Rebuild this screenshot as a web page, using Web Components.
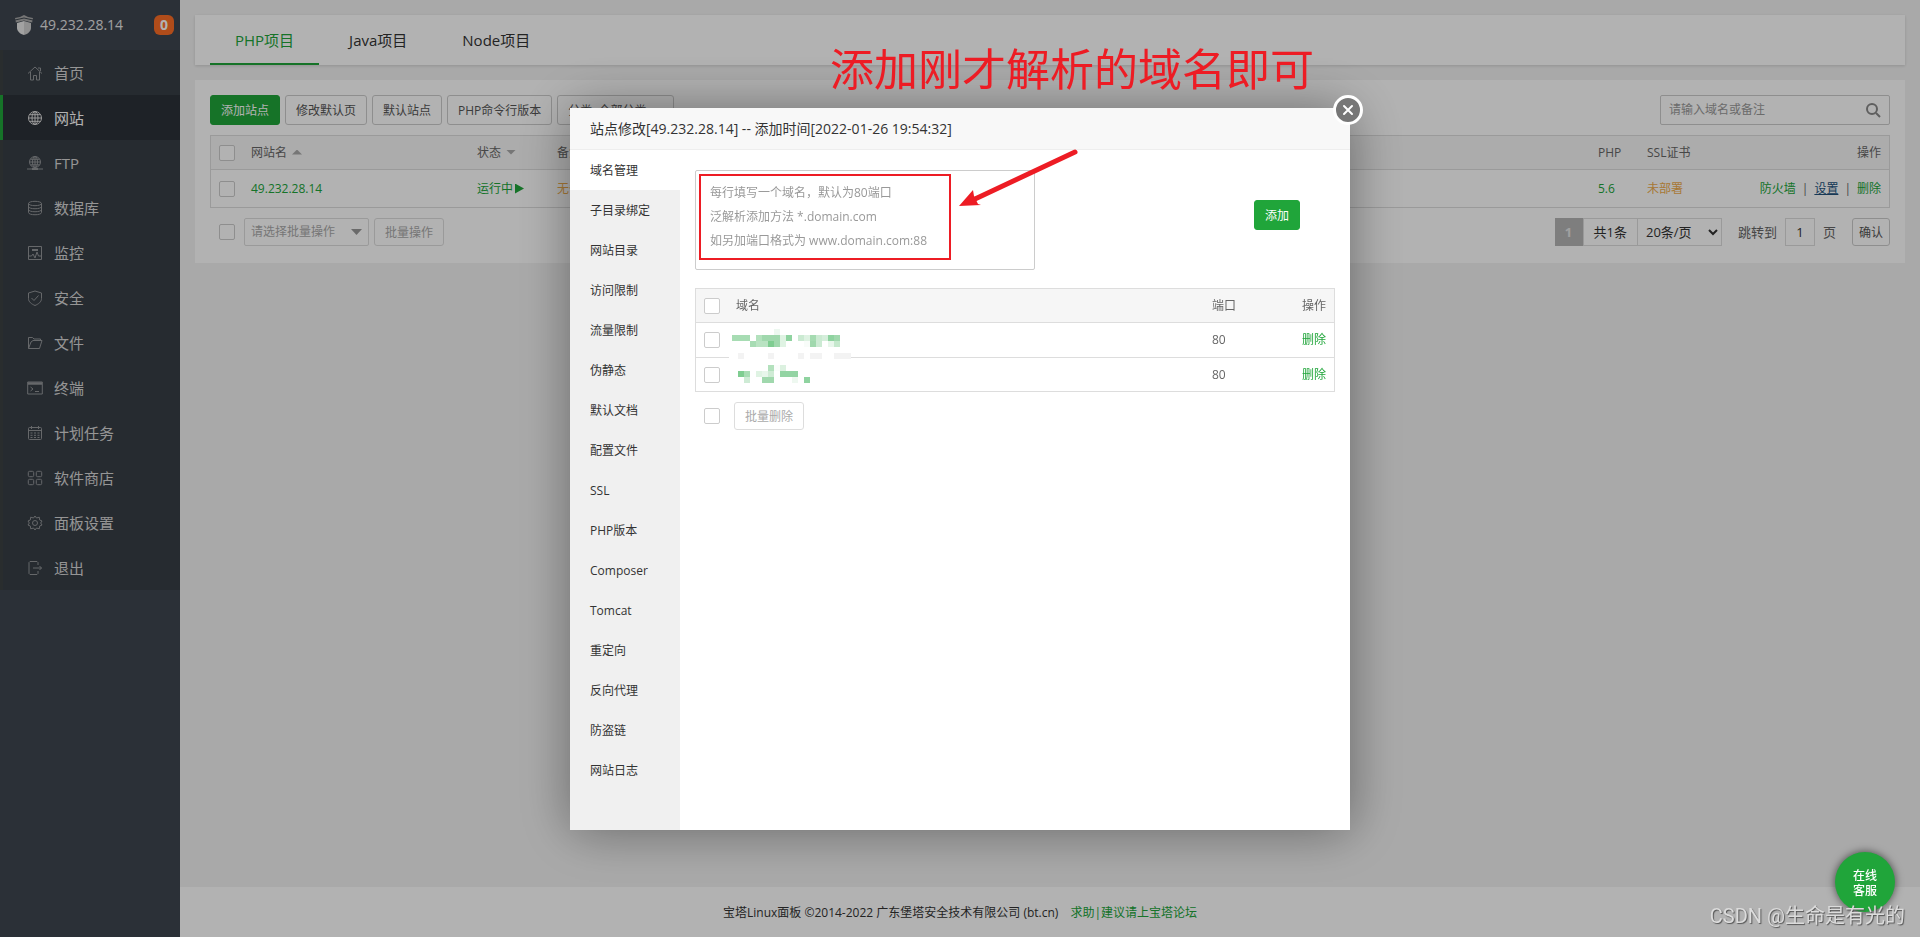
<!DOCTYPE html>
<html lang="zh-CN">
<head>
<meta charset="utf-8">
<title>宝塔Linux面板</title>
<style>
  body {
    margin: 0;
    background: #f3f3f3;
    color: #333;
    font: 12px/18px "Open Sans", "Noto Sans CJK SC", sans-serif;
    --green: #20a53a;
    --orange: #f0ad4e;
    --line: #ddd;
  }
</style>
</head>
<body>
<bt-app></bt-app>

<script>
const BASE = `
  *, *::before, *::after { box-sizing: border-box; }
  a { color: var(--green); text-decoration: none; }
  button, input, select, textarea { font: inherit; margin: 0; }
  table { width: 100%; border: 1px solid var(--line); border-spacing: 0; table-layout: fixed; }
  th { height: 34px; padding: 0 8px; font-weight: 400; text-align: left; color: #666; background: #f6f6f6; border-bottom: 1px solid var(--line); }
  td { padding: 0 8px; color: #666; }
  .r { text-align: right; }
`;

function define(name, html, setup) {
  customElements.define(name, class extends HTMLElement {
    connectedCallback() {
      if (this.shadowRoot) return;
      const root = this.attachShadow({ mode: "open" });
      const tpl = document.createElement("template");
      tpl.innerHTML = `<style>${BASE}</style>` + html;
      root.append(tpl.content.cloneNode(true));
      if (setup) setup(this, root);
    }
  });
}

const ICONS = {
  home: '<path d="M1 8.500 8 2l7 6.500M3.500 7v8h3v-4.500h3V15h3V7M11 3h2.500v3"/>',
  globe: '<circle cx="8" cy="8" r="6.500"/><ellipse cx="8" cy="8" rx="3" ry="6.500"/><path d="M8 1.500v13M1.500 8h13M2.500 4.700h11M2.500 11.300h11"/>',
  ftp: '<circle cx="8" cy="7" r="5.500"/><ellipse cx="8" cy="7" rx="2.500" ry="5.500"/><path d="M8 1.500v11M2.500 7h11M3.500 4.300h9M3.500 9.800h9M0 14h16"/><path d="M5 14h6" stroke-width="2"/>',
  db: '<ellipse cx="8" cy="3.500" rx="6.500" ry="2.200"/><path d="M1.500 3.500v9c0 3 13 3 13 0v-9M1.500 6.500c0 3 13 3 13 0M1.500 9.500c0 3 13 3 13 0"/>',
  monitor: '<path d="M1.500 1.500h13v13h-13zM5 4.500h6M5 5.500h6M1.500 11h3l1.500-2 2 4 2-6 1.500 4h3"/>',
  shield: '<path d="M8 1 14.500 3v5.500c0 3.500-3 5.500-6.500 7-3.500-1.500-6.500-3.500-6.500-7V3zM4.500 8l2.500 2.500L11.500 5.500"/>',
  folder: '<path d="M1.500 13.500v-11h4l1.500 1.500h6.500v1.500M1.500 13.500h11l2.500-8H6L4 7z"/>',
  terminal: '<path d="M.700 2h14.600v12H.700zM3.500 7l2.500 2-2.500 2M8 11.500h4"/><path d="M1 3.500h14" stroke-width="2.500"/>',
  calendar: '<rect x="1.500" y="2.500" width="13" height="12" rx="1"/><path d="M4.500 1v3M11.500 1v3M1.500 5.500h13"/><path d="M3.500 8h9M3.500 10.300h9M3.500 12.500h9" stroke-dasharray="2 1.500"/>',
  apps: '<rect x="1.300" y="1.300" width="5.400" height="5.400" rx="1.300"/><rect x="9.300" y="1.300" width="5.400" height="5.400" rx="1.300"/><rect x="1.300" y="9.300" width="5.400" height="5.400" rx="1.300"/><rect x="9.300" y="9.300" width="5.400" height="5.400" rx="1.300"/>',
  gear: '<circle cx="8" cy="8" r="2.500"/><path d="m8 1 1.500 2 2.800-.8.300 2.700 2.400 1.100L13.700 8l1.300 2-2.400 1.100-.3 2.700-2.800-.8L8 15l-1.500-2-2.800.8-.3-2.700L1 10l1.300-2L1 6l2.400-1.100.3-2.700 2.800.8z"/>',
  exit: '<path d="M11 5V2.500L10 1.500H3L2 2.500v11l1 1h7l1-1V11M6 8h8.500M12.500 6l2 2-2 2"/>'
};

define("bt-icon", `
  <style>
    :host { display: block; width: 16px; height: 16px; }
    svg { display: block; width: 100%; height: 100%; fill: none; stroke: currentColor; stroke-width: 1; }
  </style>
  <svg viewBox="0 0 16 16" aria-hidden="true"></svg>`,
  (el, root) => { root.querySelector("svg").innerHTML = ICONS[el.getAttribute("name")]; });

define("bt-nav-item", `
  <style>
    :host { display: block; }
    a { display: flex; align-items: center; gap: 11px; height: 45px; padding-left: 24px; border-left: 3px solid #3b4142; background: #373e46; color: #d6d6d6; font-size: 15px; }
    bt-icon { color: #929598; }
    :host([active]) a { background: #2c3138; border-left-color: var(--green); color: #fff; }
    :host([active]) bt-icon { color: #ddd; }
  </style>
  <a href="#"><span><slot></slot></span></a>`,
  (el, root) => {
    const icon = document.createElement("bt-icon");
    icon.setAttribute("name", el.getAttribute("icon"));
    root.querySelector("a").prepend(icon);
  });

define("bt-sidebar", `
  <style>
    :host { display: block; flex: 0 0 180px; background: #3e4550; }
    header { display: flex; align-items: center; height: 50px; padding: 0 6px 0 15px; color: #fff; font-size: 14px; }
    header svg { width: 18px; height: 20px; margin-right: 7px; }
    header a { color: #e6e6e6; flex: 1; }
    b { width: 20px; height: 20px; border-radius: 6px; background: #fc6d26; color: #fff; text-align: center; font-size: 14px; line-height: 20px; }
  </style>
  <header>
    <svg viewBox="0 0 18 20" aria-hidden="true">
      <path fill="#aaa" d="M9 0 13 2 18 3 17 8 9 6 1 8 0 3 5 2z"/>
      <path stroke="#3c444d" fill="none" d="M0 5 9 3l9 2M1 8l8-2 8 2"/>
      <path fill="#e8e8e8" d="M2 8 9 6v14c-4-1-7-4-7-7z"/>
      <path fill="#cfcfcf" d="M16 8 9 6v14c4-1 7-4 7-7z"/>
    </svg>
    <a href="#">49.232.28.14</a><b>0</b>
  </header>
  <nav>
    <bt-nav-item icon="home">首页</bt-nav-item>
    <bt-nav-item icon="globe" active>网站</bt-nav-item>
    <bt-nav-item icon="ftp">FTP</bt-nav-item>
    <bt-nav-item icon="db">数据库</bt-nav-item>
    <bt-nav-item icon="monitor">监控</bt-nav-item>
    <bt-nav-item icon="shield">安全</bt-nav-item>
    <bt-nav-item icon="folder">文件</bt-nav-item>
    <bt-nav-item icon="terminal">终端</bt-nav-item>
    <bt-nav-item icon="calendar">计划任务</bt-nav-item>
    <bt-nav-item icon="apps">软件商店</bt-nav-item>
    <bt-nav-item icon="gear">面板设置</bt-nav-item>
    <bt-nav-item icon="exit">退出</bt-nav-item>
  </nav>`);

define("bt-tabs", `
  <style>
    :host { display: flex; gap: 5px; height: 50px; padding: 0 15px; background: #fff; box-shadow: 0 1px 3px rgba(0,0,0,.15); }
    a { padding: 0 25px; color: #333; font-size: 15px; line-height: 50px; }
    a.on { color: var(--green); border-bottom: 2px solid var(--green); }
  </style>
  <a href="#" class="on">PHP项目</a><a href="#">Java项目</a><a href="#">Node项目</a>`);

define("bt-button", `
  <style>
    :host { display: block; flex: none; }
    button { display: block; height: 30px; padding: 1px 10px 0; border: 1px solid #ccc; border-radius: 3px; background: #fff; color: #555; line-height: 26px; white-space: nowrap; }
    :host([primary]) button { border-color: var(--green); background: var(--green); color: #fff; }
    :host([muted]) button { height: 28px; border-color: var(--line); color: #aaa; }
    :host([compact]) button { height: 28px; padding: 1px 6px 0; }
  </style>
  <button type="button"><slot></slot></button>`);

define("bt-check", `
  <style>
    :host { display: block; flex: none; width: 16px; height: 16px; }
    input { display: block; appearance: none; width: 16px; height: 16px; border: 1px solid #ccc; border-radius: 2px; background: #fff; }
  </style>
  <input type="checkbox">`,
  (el, root) => root.querySelector("input").setAttribute("aria-label", el.getAttribute("label")));

define("bt-pagination", `
  <style>
    :host { display: flex; align-items: center; font-size: 13px; color: #333; }
    .cur, .total, select, input { height: 28px; border: 1px solid var(--line); background: #fff; line-height: 26px; }
    .cur { width: 28px; background: #b5b5b5; border-color: #b5b5b5; color: #e6e6e6; text-align: center; font-weight: 700; }
    .total { padding: 0 10px; }
    select { width: 85px; margin: 0 16px 0 -1px; padding: 0 4px; color: #333; }
    input { width: 30px; margin: 0 8px; padding: 0; text-align: center; color: #333; }
    label { color: #666; }
    bt-button { margin-left: 16px; font-size: 12px; }
  </style>
  <span class="cur">1</span><span class="total">共1条</span>
  <select aria-label="每页条数"><option>20条/页</option></select>
  <label for="pg">跳转到</label><input id="pg" value="1"><label for="pg">页</label>
  <bt-button compact>确认</bt-button>`);

define("bt-site-panel", `
  <style>
    :host { display: block; padding: 15px 15px 17px; background: #fff; }
    .bar, .foot, .group { display: flex; align-items: center; gap: 5px; }
    .bar, .foot { justify-content: space-between; }
    .bar { margin-bottom: 10px; }
    .cat { display: inline-block; width: 10px; height: 5px; margin-left: 6px; background: #888; vertical-align: 2px; clip-path: polygon(0 0, 100% 0, 50% 100%); }
    .search { display: flex; align-items: center; width: 230px; height: 30px; padding: 0 8px; border: 1px solid #ccc; border-radius: 2px; }
    .search input { flex: 1; min-width: 0; padding: 0; border: 0; outline: 0; background: none; }
    ::placeholder { color: #9a9a9a; opacity: 1; }
    .search svg { width: 16px; height: 16px; fill: none; stroke: #888; stroke-width: 2; }
    td { height: 37px; }
    i { display: inline-block; width: 10px; height: 5px; margin-left: 5px; background: #aaa; vertical-align: 2px; clip-path: polygon(0 0, 100% 0, 50% 100%); }
    i.up { clip-path: polygon(50% 0, 100% 100%, 0 100%); }
    i.play { width: 9px; height: 10px; margin-left: 2px; background: var(--green); vertical-align: -1px; clip-path: polygon(0 0, 100% 50%, 0 100%); }
    .o { color: var(--orange); }
    .ops { display: flex; justify-content: flex-end; gap: 6px; }
    .ops a.cur { color: #23527c; text-decoration: underline; }
    .foot { margin-top: 10px; padding-left: 9px; }
    .batch { position: relative; margin-left: 4px; }
    .batch select { display: block; appearance: none; width: 125px; height: 28px; padding: 0 6px; border: 1px solid var(--line); border-radius: 2px; background: #fff; color: #aaa; opacity: 1; }
    .batch i { position: absolute; right: 7px; top: 11px; width: 11px; height: 6px; background: #999; pointer-events: none; }
  </style>
  <div class="bar">
    <div class="group">
      <bt-button primary>添加站点</bt-button>
      <bt-button>修改默认页</bt-button>
      <bt-button>默认站点</bt-button>
      <bt-button>PHP命令行版本</bt-button>
      <bt-button>分类: 全部分类<span class="cat"></span></bt-button>
    </div>
    <div class="search">
      <input aria-label="搜索" placeholder="请输入域名或备注">
      <svg viewBox="0 0 16 16" aria-hidden="true"><circle cx="7" cy="7" r="5"/><path d="m11 11 4 4"/></svg>
    </div>
  </div>
  <table>
    <colgroup><col style="width:32px"><col style="width:226px"><col style="width:80px"><col><col style="width:49px"><col style="width:90px"><col style="width:160px"></colgroup>
    <thead><tr><th><bt-check label="全选"></bt-check></th><th>网站名<i class="up"></i></th><th>状态<i></i></th><th>备注</th><th>PHP</th><th>SSL证书</th><th class="r">操作</th></tr></thead>
    <tbody><tr><td><bt-check label="49.232.28.14"></bt-check></td><td><a href="#">49.232.28.14</a></td><td><a href="#">运行中<i class="play"></i></a></td><td class="o">无备注</td><td><a href="#">5.6</a></td><td class="o">未部署</td><td><div class="ops"><a href="#">防火墙</a><span>|</span><a href="#" class="cur">设置</a><span>|</span><a href="#">删除</a></div></td></tr></tbody>
  </table>
  <div class="foot">
    <div class="group">
      <bt-check label="选择全部站点"></bt-check>
      <div class="batch"><select aria-label="批量操作类型"><option>请选择批量操作</option></select><i></i></div>
      <bt-button muted>批量操作</bt-button>
    </div>
    <bt-pagination></bt-pagination>
  </div>`);

define("bt-footer", `
  <style>
    :host { display: block; height: 50px; padding-right: 180px; background: #fff; text-align: center; line-height: 52px; }
    a { margin-left: 12px; }
  </style>
  宝塔Linux面板 ©2014-2022 广东堡塔安全技术有限公司 (bt.cn)<a href="#">求助|建议请上宝塔论坛</a>`);

define("bt-mosaic", `
  <style>
    :host { display: block; position: absolute; left: 34px; top: 41px; width: 122px; height: 54px; background: linear-gradient(#fff, #fff) 0 24px / 122px 6px no-repeat; }
    svg { display: block; width: 122px; height: 54px; }
  </style>
  <svg viewBox="0 0 122 54" shape-rendering="crispEdges" aria-hidden="true"></svg>`,
  (el, root) => {
    /* row, first column, run length, colour: each block is 6px square */
    const blocks = [
      [0,7,1,"#edf8f0"],
      [1,0,3,"#a7dcb3"],[1,4,1,"#b3e1bd"],[1,5,3,"#a0d8ad"],[1,8,1,"#dff3e3"],[1,9,1,"#8fd3a0"],[1,11,1,"#cbead2"],[1,12,1,"#def2e2"],[1,13,1,"#a5dbb1"],[1,14,1,"#cbead2"],[1,15,1,"#d5eedb"],[1,16,1,"#8fd3a0"],[1,17,1,"#a0d8ad"],
      [2,3,1,"#a7dcb3"],[2,4,2,"#b9e3c2"],[2,6,1,"#7fcd91"],[2,7,1,"#a0d8ad"],[2,8,1,"#dff3e3"],[2,12,1,"#f8fcf9"],[2,13,1,"#a0d8ad"],[2,14,1,"#ccead3"],[2,16,1,"#e8f6eb"],[2,17,1,"#c5e8cd"],
      [4,1,1,"#f3f3f3"],[4,6,1,"#f3f3f3"],[4,11,1,"#f3f3f3"],[4,13,2,"#f3f3f3"],[4,17,3,"#f3f3f3"],
      [6,6,1,"#b3e1bd"],[6,7,1,"#fafdfb"],[6,8,1,"#dcf1e0"],
      [7,1,1,"#7fcd91"],[7,2,1,"#a7dcb3"],[7,4,1,"#dff3e3"],[7,5,1,"#e8f6eb"],[7,6,1,"#cfebd5"],[7,8,3,"#93d4a3"],
      [8,2,1,"#ceebd5"],[8,5,2,"#a0d8ad"],[8,10,1,"#eef8f0"],[8,12,1,"#8fd3a0"]
    ];
    root.querySelector("svg").innerHTML = blocks.map(([r, c, n, f]) =>
      `<rect x="${3 + c * 6}" y="${r * 6}" width="${n * 6}" height="6" fill="${f}"/>`).join("");
  });

define("bt-domain-pane", `
  <style>
    :host { display: block; padding: 20px 15px; }
    .add { display: flex; align-items: flex-start; justify-content: space-between; padding-right: 35px; margin-bottom: 18px; }
    .add bt-button { margin-top: 30px; }
    textarea { display: block; width: 340px; height: 100px; padding: 10px 14px; border: 1px solid #ccc; border-radius: 2px; resize: none; line-height: 24px; }
    ::placeholder { color: #999; opacity: 1; }
    .list { position: relative; }
    td { height: 35px; border-bottom: 1px solid var(--line); }
    tr:last-child td { height: 33px; border-bottom: 0; }
    .foot { display: flex; align-items: center; gap: 14px; margin-top: 10px; padding-left: 9px; }
  </style>
  <div class="add">
    <textarea aria-label="域名" placeholder="每行填写一个域名，默认为80端口&#10;泛解析添加方法 *.domain.com&#10;如另加端口格式为 www.domain.com:88"></textarea>
    <bt-button primary>添加</bt-button>
  </div>
  <div class="list">
    <table>
      <colgroup><col style="width:32px"><col><col style="width:60px"><col style="width:70px"></colgroup>
      <thead><tr><th><bt-check label="全选域名"></bt-check></th><th>域名</th><th>端口</th><th class="r">操作</th></tr></thead>
      <tbody>
        <tr><td><bt-check label="域名一"></bt-check></td><td></td><td>80</td><td class="r"><a href="#">删除</a></td></tr>
        <tr><td><bt-check label="域名二"></bt-check></td><td></td><td>80</td><td class="r"><a href="#">删除</a></td></tr>
      </tbody>
    </table>
    <bt-mosaic></bt-mosaic>
  </div>
  <div class="foot"><bt-check label="选择全部域名"></bt-check><bt-button muted>批量删除</bt-button></div>`);

define("bt-modal", `
  <style>
    :host { display: block; position: relative; width: 780px; background: #fff; box-shadow: 1px 1px 50px rgba(0,0,0,.4); }
    h1 { margin: 0; height: 42px; padding: 0 20px; background: #f8f8f8; border-bottom: 1px solid #eee; font-size: 14px; font-weight: 400; line-height: 41px; }
    .body { display: flex; }
    nav { flex: 0 0 110px; padding-bottom: 40px; background: #f0f0f0; }
    nav a { display: block; height: 40px; padding-left: 20px; color: #333; line-height: 42px; }
    nav a.on { background: #fff; }
    .main { flex: 1; min-width: 0; }
    .close { position: absolute; right: -13px; top: -13px; width: 30px; height: 30px; padding: 0; border: 3px solid #fff; border-radius: 50%; background: #777; }
    .close svg { display: block; width: 24px; height: 24px; stroke: #fff; stroke-width: 2; stroke-linecap: round; }
  </style>
  <h1><slot name="title"></slot></h1>
  <div class="body"><nav></nav><div class="main"><slot></slot></div></div>
  <button class="close" type="button" aria-label="关闭"><svg viewBox="0 0 24 24"><path d="m8 8 8 8M16 8l-8 8"/></svg></button>
  <slot name="notes"></slot>`,
  (el, root) => {
    root.querySelector("nav").innerHTML = el.getAttribute("menu").split(",")
      .map((t, i) => `<a href="#"${i ? "" : ' class="on"'}>${t}</a>`).join("");
  });

define("bt-notes", `
  <style>
    :host { display: block; position: absolute; inset: 0; pointer-events: none; color: #ed1c24; }
    p { position: absolute; left: 260px; top: -71px; margin: 0; font-size: 44px; line-height: 60px; white-space: nowrap; font-family: "Noto Sans CJK SC", sans-serif; }
    .box { position: absolute; left: 129px; top: 66px; width: 252px; height: 86px; border: 2px solid; }
    svg { position: absolute; left: 385px; top: 38px; width: 130px; height: 66px; }
  </style>
  <p>添加刚才解析的域名即可</p>
  <div class="box"></div>
  <svg viewBox="0 0 130 66" aria-hidden="true"><path d="M120 6 20 53" stroke="currentColor" stroke-width="5" stroke-linecap="round"/><path fill="currentColor" d="M4 60 18 44l1 6 4 8 3 1z"/></svg>`);

define("bt-support", `
  <style>
    :host { display: block; position: fixed; right: 25px; bottom: 25px; }
    button { width: 60px; height: 60px; padding: 2px 15px 0; border: 0; border-radius: 50%; background: var(--green); color: #fff; font-weight: 500; line-height: 15px; box-shadow: 0 0 8px rgba(0,0,0,.6); }
  </style>
  <button type="button">在线客服</button>`);

define("bt-watermark", `
  <style>
    :host { display: block; position: fixed; right: 15px; bottom: 6px; color: #dcdcdc; font: 20px/30px Roboto, "Noto Sans CJK SC", sans-serif; text-shadow: 1px 1px 1px #555; pointer-events: none; }
  </style>
  CSDN @生命是有光的`);

define("bt-app", `
  <style>
    :host { display: flex; min-height: 100vh; }
    .page { flex: 1; min-width: 0; display: flex; flex-direction: column; }
    main { flex: 1; display: flex; flex-direction: column; gap: 15px; padding: 15px; }
    .shade { position: fixed; inset: 0; display: flex; align-items: center; justify-content: center; padding-top: 1px; background: rgba(0,0,0,.3); }
  </style>
  <bt-sidebar></bt-sidebar>
  <div class="page">
    <main><bt-tabs></bt-tabs><bt-site-panel></bt-site-panel></main>
    <bt-footer></bt-footer>
  </div>
  <div class="shade">
    <bt-modal menu="域名管理,子目录绑定,网站目录,访问限制,流量限制,伪静态,默认文档,配置文件,SSL,PHP版本,Composer,Tomcat,重定向,反向代理,防盗链,网站日志">
      <span slot="title">站点修改[49.232.28.14] -- 添加时间[2022-01-26 19:54:32]</span>
      <bt-domain-pane></bt-domain-pane>
      <bt-notes slot="notes"></bt-notes>
    </bt-modal>
  </div>
  <bt-support></bt-support>
  <bt-watermark></bt-watermark>`);
</script>
</body>
</html>
